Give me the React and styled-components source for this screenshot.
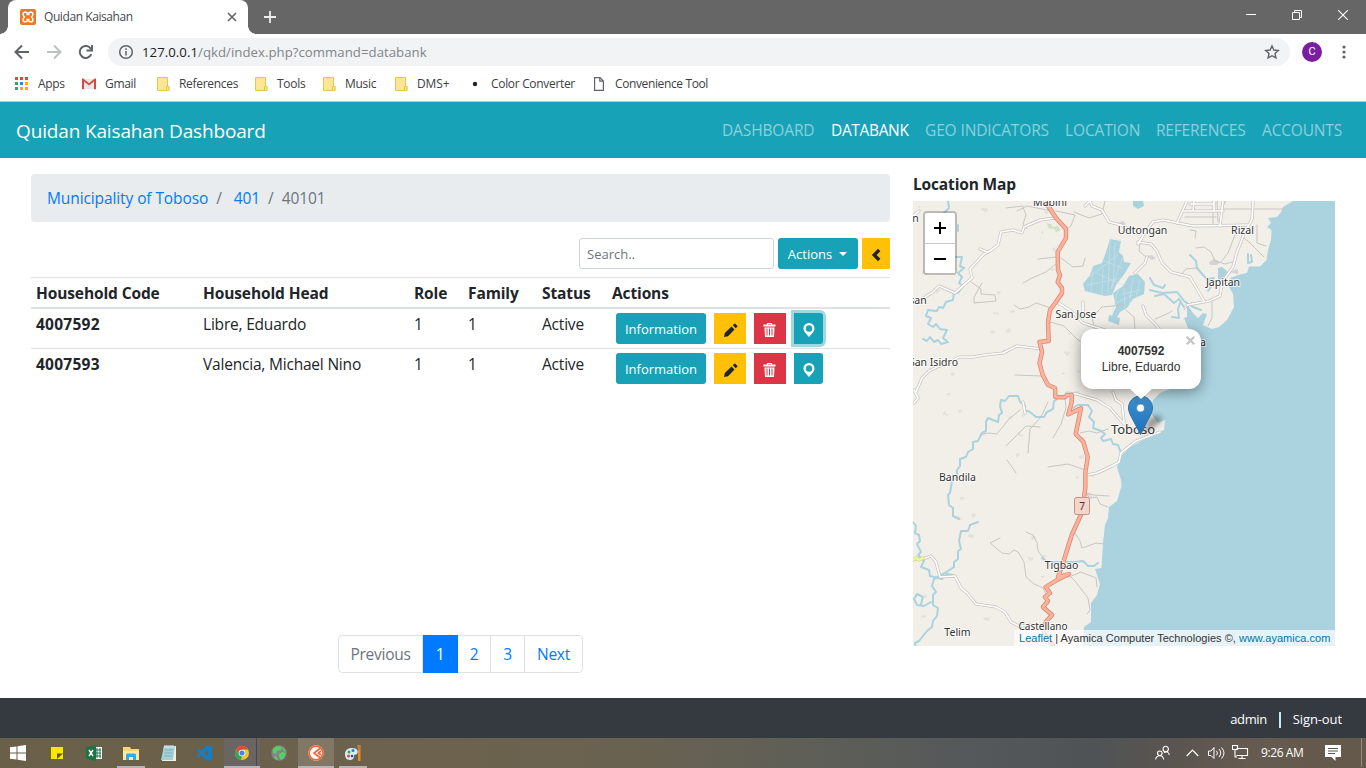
import React from "react";
import styled, { createGlobalStyle, css } from "styled-components";

const Global = createGlobalStyle`
  *, *::before, *::after { box-sizing: border-box; }
  html, body { margin: 0; height: 768px; overflow: hidden; background: #fff; }
  body { font-family: "Open Sans", "Noto Sans", sans-serif; font-size: 15.5px; color: #212529; line-height: 24px; }
  svg { display: block; flex: none; }
  a { text-decoration: none; }
`;

const Screen = styled.div`
  width: 1366px;
  height: 768px;
  display: flex;
  flex-direction: column;
  overflow: hidden;
`;

/* ---------- browser chrome ---------- */
const TabStrip = styled.div`
  height: 34px;
  background: #666;
  display: flex;
  align-items: stretch;
`;
const TabFoot = styled.span`
  width: 8px;
  background: radial-gradient(circle at ${(p) => (p.$right ? "100%" : "0")} 0, #666 7.500px, #fff 8px) bottom / 8px 8px no-repeat;
`;
const Tab = styled.div`
  width: 240px;
  background: #fff;
  border-radius: 8px 8px 0 0;
  display: flex;
  align-items: center;
  padding: 0 10px 0 12px;
  font-size: 12px;
  letter-spacing: -0.42px;
  color: #45494d;
`;
const TabTitle = styled.span`
  flex: 1;
  margin-left: 8px;
`;
const NewTab = styled.div`
  width: 28px;
  display: flex;
  align-items: center;
  justify-content: center;
`;
const WindowButtons = styled.div`
  margin-left: auto;
  display: flex;
  height: 29px;
`;
const WindowButton = styled.div`
  width: 46px;
  display: flex;
  align-items: center;
  justify-content: center;
`;
const AddressRow = styled.div`
  height: 35px;
  background: #fff;
  display: flex;
  align-items: center;
  padding: 0 14px;
`;
const NavIcons = styled.div`
  display: flex;
  gap: 16px;
  width: 94px;
`;
const AddressBar = styled.div`
  width: 1182px;
  height: 28px;
  border-radius: 14px;
  background: #f1f3f4;
  display: flex;
  align-items: center;
  padding: 0 10px;
`;
const Url = styled.span`
  flex: 1;
  margin-left: 8px;
  font-size: 13.2px;
  letter-spacing: 0.04px;
  color: #80868b;
  b { font-weight: 400; color: #202124; }
`;
const Avatar = styled.div`
  width: 20px;
  height: 20px;
  margin: 0 17px 0 12px;
  border-radius: 50%;
  background: #7b1fa2;
  color: #fff;
  font: 11px/20px Roboto, sans-serif;
  text-align: center;
`;
const Bookmarks = styled.div`
  height: 33px;
  display: flex;
  align-items: center;
  padding: 0 0 3px 14px;
  border-bottom: 1px solid #c3c6c8;
  background: #fff;
`;
const Bookmark = styled.div`
  display: flex;
  align-items: center;
  width: ${(p) => p.$w}px;
  font-size: 12px;
  letter-spacing: ${(p) => p.$ls || -0.3}px;
  color: #3c4043;
  white-space: nowrap;
`;
const BookmarkIcon = styled.span`
  width: ${(p) => p.$w}px;
  display: flex;
`;

/* ---------- application ---------- */
const Navbar = styled.header`
  height: 56px;
  background: #17a2b8;
  display: flex;
  align-items: center;
  justify-content: space-between;
  padding: 0 24px 0 16px;
`;
const Brand = styled.div`
  color: #fff;
  font-size: 19px;
  letter-spacing: -0.15px;
  padding-top: 2px;
`;
const NavLinks = styled.nav`
  display: flex;
  justify-content: space-between;
  width: 620px;
  padding-bottom: 1px;
`;
const NavLink = styled.a`
  width: ${(p) => p.$w}px;
  white-space: nowrap;
  letter-spacing: ${(p) => p.$ls}px;
  color: ${(p) => (p.$active ? "#fff" : "rgba(255,255,255,.5)")};
`;
const Content = styled.main`
  height: 540px;
  display: flex;
  padding: 16px 31px 0;
  gap: 23px;
`;
const ListPane = styled.section`
  width: 859px;
  height: 499px;
  display: flex;
  flex-direction: column;
`;
const Breadcrumb = styled.div`
  height: 48px;
  border-radius: 4px;
  background: #e9ecef;
  padding: 12px 16px;
  display: flex;
  gap: 8px;
  letter-spacing: -0.1px;
  color: #6c757d;
  a { color: #007bff; }
  a + i + a { margin-left: 4px; }
  i { font-style: normal; }
`;
const Tools = styled.div`
  margin-top: 16px;
  display: flex;
  justify-content: flex-end;
  gap: 4px;
`;
const Search = styled.input`
  width: 195px;
  height: 31px;
  border: 1px solid #ced4da;
  border-radius: 3px;
  padding: 4px 7px;
  font: 13px "Open Sans", sans-serif;
  outline: none;
  &::placeholder { color: #6c757d; opacity: 1; }
`;
const tones = {
  info: css`background: #17a2b8; color: #fff;`,
  warning: css`background: #ffc107; color: #212529;`,
  danger: css`background: #dc3545; color: #fff;`,
};
const Button = styled.button`
  ${(p) => tones[p.$tone]}
  width: ${(p) => p.$w}px;
  height: 31px;
  padding: ${(p) => p.$pad || "0"};
  border: 0;
  border-radius: ${(p) => p.$radius ?? "3px"};
  display: flex;
  align-items: center;
  justify-content: center;
  gap: 7px;
  font: 13px "Open Sans", sans-serif;
  box-shadow: ${(p) => (p.$focus ? "0 0 0 3px rgba(23,162,184,.42)" : "none")};
`;
const Caret = styled.span`
  border: 4px solid transparent;
  border-top-color: #fff;
  border-bottom: 0;
`;
const Table = styled.div`
  margin-top: 8px;
  border-top: 1px solid #dee2e6;
`;
const Row = styled.div`
  display: grid;
  grid-template-columns: 167px 211px 54px 74px 70px 1fr;
  height: ${(p) => (p.$head ? 31 : 40)}px;
  padding: ${(p) => (p.$head ? 3 : 4)}px 5px 0;
  border-bottom: ${(p) => (p.$head ? "2px solid #dee2e6" : p.$last ? "0" : "1px solid #dee2e6")};
  font-weight: ${(p) => (p.$head ? 700 : 400)};
  letter-spacing: ${(p) => (p.$head ? -0.12 : -0.2)}px;
`;
const Cell = styled.span`
  margin-top: -1px;
`;
const Code = styled(Cell)`
  font-weight: 700;
  letter-spacing: 0.25px;
`;
const RowActions = styled.div`
  display: flex;
  gap: 8px;
  padding-left: 4px;
`;
const Pagination = styled.div`
  margin: auto 0 0 307px;
  display: flex;
  width: 245px;
  height: 38px;
  border: 1px solid #dee2e6;
  border-radius: 4px;
  letter-spacing: -0.25px;
`;
const Page = styled.a`
  width: ${(p) => p.$w}px;
  margin: ${(p) => (p.$active ? "-1px 0" : 0)};
  line-height: ${(p) => (p.$active ? 38 : 36)}px;
  text-align: center;
  border-right: ${(p) => (p.$end ? 0 : "1px solid #dee2e6")};
  color: ${(p) => (p.$active ? "#fff" : p.$muted ? "#6c757d" : "#007bff")};
  background: ${(p) => (p.$active ? "#007bff" : "transparent")};
  ${(p) => p.$active && "border-color: #007bff;"}
`;
const MapPane = styled.section`
  width: 422px;
`;
const MapTitle = styled.div`
  font-weight: 700;
  letter-spacing: -0.15px;
  line-height: 20px;
  height: 27px;
`;
const MapFrame = styled.div`
  position: relative;
  width: 422px;
  height: 445px;
  overflow: hidden;
  background: #f2efe9;
`;
const ZoomControl = styled.div`
  position: absolute;
  left: 10px;
  top: 10px;
  width: 34px;
  border: 2px solid rgba(0, 0, 0, 0.22);
  background-clip: padding-box;
  border-radius: 4px;
`;
const ZoomButton = styled.div`
  height: 29px;
  background: #fff;
  display: flex;
  align-items: center;
  justify-content: center;
  &:first-child { height: 31px; border-bottom: 1px solid #ccc; border-radius: 2px 2px 0 0; }
`;
const Popup = styled.div`
  position: absolute;
  left: 168px;
  top: 128px;
  width: 120px;
  height: 60px;
  border-radius: 12px;
  background: #fff;
  box-shadow: 0 3px 14px rgba(0, 0, 0, 0.4);
  font: 12px/16px "Liberation Sans", Arial, sans-serif;
  color: #333;
  text-align: center;
  padding-top: 14px;
`;
const PopupClose = styled.span`
  position: absolute;
  right: 6px;
  top: 7px;
`;
const Attribution = styled.div`
  position: absolute;
  right: 0;
  bottom: 0;
  height: 16px;
  width: 321px;
  padding: 0 5px;
  background: rgba(255, 255, 255, 0.7);
  font: 11px/16px "Liberation Sans", Arial, sans-serif;
  letter-spacing: 0.02px;
  white-space: nowrap;
  color: #333;
  a { color: #0078a8; }
`;
const Footer = styled.footer`
  height: 40px;
  background: #343a40;
  color: #fff;
  display: flex;
  align-items: center;
  justify-content: flex-end;
  padding: 3px 24px 0 0;
  font-size: 13px;
`;
const FooterLink = styled.a`
  margin-top: -2px;
  letter-spacing: ${(p) => p.$ls}px;
`;
const FooterRule = styled.span`
  width: 2px;
  height: 16px;
  background: #c9e8f4;
  margin: 0 12px;
`;

/* ---------- taskbar ---------- */
const Taskbar = styled.div`
  height: 30px;
  display: flex;
  align-items: stretch;
  background: linear-gradient(90deg, #6a6049 0, #6c624d 430px, #6a6250 620px, #5f5f57 800px, #54585a 980px, #4f5355 1090px, #5b5550 1180px, #665b50 1260px, #635849 100%);
  color: #fff;
`;
const Task = styled.div`
  width: ${(p) => p.$w || 37}px;
  display: flex;
  align-items: center;
  justify-content: center;
  background: ${(p) => p.$bg || "transparent"};
  border-bottom: ${(p) => (p.$open ? "2px solid #b9b2bc" : "0")};
  ${(p) => p.$open && "padding-top: 2px;"}
  margin: 0 ${(p) => p.$gap || 0}px;
`;
const Tray = styled.div`
  margin-left: auto;
  display: flex;
  align-items: center;
  padding-bottom: 1px;
`;
const TrayIcon = styled.div`
  width: ${(p) => p.$w}px;
`;
const Clock = styled.div`
  width: 64px;
  font-size: 12px;
  letter-spacing: -0.4px;
`;
const ShowDesktop = styled.div`
  width: 5px;
  align-self: stretch;
  border-left: 1px solid #918a80;
`;

/* ---------- icons ---------- */
const XamppIcon = () => (
  <svg width="16" height="16" viewBox="0 0 16 16">
    <rect width="16" height="16" rx="2" fill="#e9782d" />
    <path d="M4.800 3.200H6q1.200 0 1.200 1.300v1h1.600v-1Q8.800 3.200 10 3.200h1.200q1.700 0 1.700 1.800 0 2-1.300 3 1.300 1 1.300 3 0 1.800-1.700 1.800H10q-1.200 0-1.200-1.300v-1H7.200v1q0 1.300-1.200 1.300H4.800q-1.700 0-1.700-1.800 0-2 1.300-3-1.300-1-1.300-3 0-1.800 1.700-1.800z" fill="none" stroke="#fff" strokeWidth="1.500" />
  </svg>
);
const StrokeIcon = ({ w = 16, h = 16, box, d, color = "#5f6368", sw = 2 }) => (
  <svg width={w} height={h} viewBox={box || `0 0 ${w} ${h}`} fill="none" stroke={color} strokeWidth={sw}>
    <path d={d} />
  </svg>
);
const AppsIcon = () => (
  <svg width="14" height="14" viewBox="0 0 14 14">
    {["#ea4335", "#ea4335", "#ea4335", "#34a853", "#2684fc", "#f9ab00", "#34a853", "#f9ab00", "#f9ab00"].map((c, i) => (
      <rect key={i} x={1 + (i % 3) * 5} y={Math.floor(i / 3) * 5} width="3" height="3" fill={c} />
    ))}
  </svg>
);
const GmailIcon = () => (
  <svg width="14" height="12" viewBox="0 0 14 12">
    <path d="M1 1h12v10H1z" fill="#e8e8e8" />
    <path d="M0 1.200Q0 .3.9.300L7 5.200 13.100.300Q14 .3 14 1.200V11.300H12V3.600L7 7.500 2 3.600V11.300H0z" fill="#d54b3d" />
  </svg>
);
const FolderIcon = () => (
  <svg width="13" height="14" viewBox="0 0 13 14">
    <path d="M.5.500h10v9h1.500v4H.500z" fill="#ffe694" stroke="#e9c453" />
    <path d="M9.500 13.500v-4h2.500v4z" fill="#ffe694" stroke="#e9c453" />
  </svg>
);
const FileIcon = () => (
  <svg width="10" height="14" viewBox="0 0 10 14" fill="none" stroke="#5f6368" strokeWidth="1.200">
    <path d="M.6.600h5.400l3.400 3.400v9.400H.600zM5.800.600v3.600h3.600" />
  </svg>
);
const PencilIcon = () => (
  <svg width="14" height="14" viewBox="0 0 14 14" fill="#212529">
    <path d="M0 14l.8-4L7.500 3.500l3 3L4 13.200zM8.700 2.300L10.300.700q.5-.5 1 0l2 2q.5.500 0 1L11.700 5.300z" />
  </svg>
);
const TrashIcon = () => (
  <svg width="13" height="14" viewBox="0 0 13 14" fill="#fff">
    <path d="M4 0h5v1.500h3.500v2H.500v-2H4zM5 1v.6h3V1zM1.500 4.500h10L11 14H2zM3.500 5.500v7h1v-7zm2.500 0v7h1v-7zm2.500 0v7h1v-7z" fillRule="evenodd" />
  </svg>
);
const PinIcon = () => (
  <svg width="12" height="14" viewBox="0 0 12 14" fill="#fff">
    <path d="M6 0a5.500 5.500 0 0 0-5.500 5.500C.5 8.500 3.500 11 6 14c2.500-3 5.500-5.500 5.500-8.500A5.500 5.500 0 0 0 6 0zm0 2.300a3.200 3.200 0 1 1 0 6.400 3.200 3.200 0 0 1 0-6.400z" fillRule="evenodd" />
  </svg>
);

const shore =
  "M1293 201L1288 204 1283 207 1281 212 1277 217 1268 218 1271 223 1267 227 1271.500 230 1271 240 1268 250 1266.500 260 1260 266.500 1249 266.500 1247 273 1240 274.500 1230 278 1228 285 1233 294 1234 307 1227 320 1219 327 1212 329 1203 325 1207 314 1203 313 1198 318 1193 313 1185 301 1187 306 1187 317 1184 318 1189 330 1189 386 1170 389 1160 393 1153 400 1150 412 1158 423 1165 420 1164 430 1147 438 1130 447 1122 455 1117 467 1121 480 1121.500 486 1117 501 1109 507 1108 518 1105 525 1103 543 1101.500 568 1095 569 1100 584 1097 595 1091 603 1091 622 1084 627 1083 646H1335V201Z";
const highway =
  "M1045 201L1056 218 1066 229V238L1057.700 252 1058 270 1060 275 1057.700 282 1062 288V293L1056 302 1050 310 1048 322 1048.700 341 1039.500 342 1042 352 1039.500 363 1042.700 375 1048 385 1055 388 1055.300 397 1065 397.300 1067 395H1071.700V402L1068.300 414.300 1081 408.300 1075.700 434 1083.300 441.700 1087.700 457 1085.300 473V488L1081.700 513 1071.700 535 1063 563 1058 577 1069 574 1057 580 1045.700 587 1050 593 1045 597 1048 601 1043 607 1052 615 1045.700 622 1044 633 1053 646";
const rivers = [
  "M948 201l1 7-5 5 4 5-3 8M958 225v6M955 257h7l-2 9 4 2-6 5 4 4-3 6 4 3-5 7-4-1-1 8-7 2-3 6-4-1-2 4-9-1-2 6 5 2-3 6 5 3 3-3 4 5 7 1-4 8 5 4-7 2-3-4-4 2-4-5-3 4-4-2",
  "M1066 397l-7 1-5 3-1 8-6 3-3 5h-8l-6-5-5-2v-5l-5-3-2-6h-9l-4 5-4-1-1 6 2 7-3 2-1 7-10-4-2 4v9l-4 2-4 8-5 1v7l-5 3-2 5-6 2v7l-3 4v7l-5 4-2 12-2 2 1 10 4 3v8l6 3",
  "M978 522l-8 3-2 6h-7l-2 10 2 8-3 2v8l-4 3v5l-9 6-11 6-2 7 4 6-3 3v10l5 3-1 8-4 5-1 6-5 4-8 10-4 2 1 6 4 1v3",
  "M913 522l3 4-1 7 4 2 1 6-3 3 4 8-3 3 6 6-3 6 8 3 1 6 12 3 5-5 6 1M931 602l-7 4-7-1-3-6 3-5 6 3-2 7",
  "M1073 408l5-3h10l4 6-3 6 5 5-1 6 8 3 4 3-4 4 2 3 8-2 2 5 5 1 3 8",
  "M1042 558l5 4h28l8-1 5 5h6l4-3",
  "M1190 255l6 6 1 7 6 7 4 4 7-1-5 4 15-1M1207 282l4 5-3 4M1150 278l4 7 9 3 2-3M1155 296l9-2 10 9 5-4 5 8M1150 290l12 3 15-1 7 9 9 6 8 3M1172 317l7 1-1-9 2-6M1248 254v9l4-1-1-7",
];
const whiteRoads = [
  "M1055 218l-15 2-16 7-2 6-9-3-12 2-3 13-8 6-6 3-14 15 2 9-7 6-10 9-16-7-7 7-4 2-8 6M980 249l7 3M919 211l-6 5",
  "M1085 206l5-5 2 5 10 4 7 12 12 3 15 8M1138 244l8-13 7-9 10-2 30 6 54-1M1253 201l-1 18-8 15-7 18-4 15-11 15-2 14-11 5-22 4M1138 242l13 2 6 7 5 12 9 9 19 5 14 24M1147 257l-2 6-10 10",
  "M1187 201l-10 22M1223 201l-3 25M1183 211h40M1190 204h24M1214 201v10M1193 211l1-10",
  "M1042 349l-25-3-14 7-18 2-12 2h-14l-9 5-13 5-8 4-7 7-6 14M914 390l4 8-4 5",
  "M1067 393l10 1 20 6 13 8 14 16 12 8M1087 475l10-2 15-7 7-4 2-9 15-12 24-9M1113 392l3 8 6 4 2 18",
  "M923 559l8-3 5 6 4 15 15-1 6 12 6 5 9 11 20 3 9 5 6 10 8 4 12-1M1056 301l15 10 12 12 22 7M1083 302l0 13M1143 306l3 9 11 11 5 8M1023 402l2 11",
];
const paths = [
  "M1017 211l10-5 25 5M1023 207l3 8-3 9 4 5M1056 211l19 4-4 11-5 3M1006 208l17-2M971 282l10 7 0 5 14 1 1 6-22 2 0-6 8-14M1057 257l-19 2M1057 263l-11 9-14 6-9 5M1061 258l12 9 10-1 2-8M1014 305l6 4 9-2 7-4 12 4 4 4M1047 321l17 5 14 14 12 5",
  "M1048 402l-7 15-11 12-2 24M1040 427l-14-1-20 20M1007 460l9 13M980 435l8-2 9 1 12-15 11-9M1015 375l26 1M1065 398l1 10-5 16-8 14M1080 433l9-2 8 2 11-4M1048 467l20-3 17 6",
  "M1000 538l-10 5 12 10 7 1 5-4 4 2 6 10 2 15 8 7 9 4 3 6M1026 532l7 3 4 8 1 8 7 9 12 5M1075 533l5 8 2 7 14-5 8 1M1083 490l7 8 7-1 3 7 8 3M1085 493l9 2 15 1M1058 577l11 0 12-5 15 6 1 9M1069 575l6 6 13 17 2 12-3 4",
  "M1235 235l-7 18-7 9M1223 209h62M1242 224v12l9 8 13 13M1257 225v18l9 3M1185 217h31M1213 211v13M1221 225v-16l6-10M1190 230l6 1-1 7M1196 248l8-1 7 5 4 9 10 3 8-2M1105 201l-3 13-13 4-15-6M1192 302l-8 8M1212 302v16l-4 8M1218 222l-1-21M1126 310l8 7 1 12M1155 319l14-6 3-2M1140 244l-1 7 7 6M1096 335l-4-18 10-10 22-2M1180 276l6-7 10-1",
];
const scrub = Array.from({ length: 80 }, (_, i) => {
  const x = 918 + ((i * 73 + (i % 7) * 11) % 190);
  const y = 206 + ((i * 127 + (i % 5) * 17) % 430);
  return `M${x} ${y}l${2 + (i % 4)} ${-(i % 3)}l1 ${1 + (i % 3)}l-3 1z`;
}).join("");
const places = [
  ["Mabini", 1050, 205.500, 10.5], ["Udtongan", 1142.500, 234, 10.500], ["Rizal", 1242.500, 234, 10.5], ["Japitan", 1223, 286, 10.5],
  ["San Jose", 1076, 318, 10.5], ["San Isidro", 933.500, 366, 10.5], ["Bandila", 957.500, 481, 10.5], ["Tigbao", 1061.500, 569, 10.5],
  ["Castellano", 1043, 630, 10], ["Telim", 957.500, 636, 10.5], ["Toboso", 1133, 434, 13], ["san", 918, 304, 10.5], ["n", 915.500, 222, 10.5], ["a", 1203, 345.500, 10.5],
];

const MapDrawing = () => (
  <svg width="422" height="445" viewBox="913 201 422 445" fill="none" strokeLinejoin="round" strokeLinecap="round">
    <defs>
      <linearGradient id="pin" x1="0" y1="0" x2="0" y2="1">
        <stop offset="0" stopColor="#3f8fcb" /><stop offset="1" stopColor="#1c72c0" />
      </linearGradient>
      <filter id="soft" x="-50%" y="-50%" width="200%" height="200%"><feGaussianBlur stdDeviation="2.8" /></filter>
    </defs>
    <path d={scrub} fill="#e3e0dd" />
    <path d="M1047 223l4 1 2 3 5-1 2 4-4 2-2-3-6-1z" fill="#cfe3c3" />
    <path d="M1209 262l5-3 6 3-3 3h-7zM1229 272l9-3v5zM1146 256l6-1 4 3-4 2zM1118 223l5-2 3 3-5 2z" fill="#d5d3d4" />
    <path d={shore} fill="#aad3df" />
    <path d="M1110 239l11 2-2 11 4 4 1 6 7 1-6 10-9 12-4 10-7 1-20-5-2-7 7-9 3-9 9-3 3-8zM1113 293l10-7 6-10 9-2 7 8-1 12-11 5-6 9-7 4-5 9-4-3 5-11zM1133 201h10l1 5-6 3-5-3zM1218 268l4-1 6 5-2 8-8 1zM1109 315l11 3-1 7-11-4z" fill="#aad3df" />
    <path d="M1110 240l-2 52M1118 255l-29 22M1087 285l36-7M1096 273l27 12M1102 260l20 8M1115 243l-2 45M1122 259l-11 30M1093 268l-2 24M1103 267l-1 27M1118 290l-6 24M1124 288l1 21M1133 278l-4 28M1140 280l-4 18M1116 303l17-8M1122 294l18-4" stroke="#cfe2e6" strokeWidth=".6" />
    {rivers.map((d, i) => <path key={i} d={d} stroke="#aad3df" strokeWidth="2" />)}
    {paths.map((d, i) => <path key={i} d={d} stroke="#c3c1be" strokeWidth=".9" />)}
    {whiteRoads.map((d, i) => <path key={i} d={d} stroke="#c5c2bd" strokeWidth="3.1" />)}
    {whiteRoads.map((d, i) => <path key={i} d={d} stroke="#fff" strokeWidth="1.7" />)}
    <path d="M913 560l3-2 3 2 4-2" stroke="#cddc8a" strokeWidth="3.5" />
    <path d="M913 560l3-2 3 2 4-2" stroke="#f4fa9c" strokeWidth="2" />
    <path d={highway} stroke="#df8069" strokeWidth="4.400" />
    <path d={highway} stroke="#f9b29c" strokeWidth="3" />
    <rect x="1074.500" y="497.500" width="15" height="17" rx="2" fill="#f2d5cd" stroke="#c99185" />
    <text x="1082" y="510" fontFamily="Noto Sans" fontSize="10" fill="#5d2c24" textAnchor="middle">7</text>
    {places.map(([name, x, y, size]) => (
      <text key={name} x={x} y={y} fontFamily="Noto Sans, sans-serif" fontSize={size} textAnchor="middle" fill="#333" stroke="#fff" strokeOpacity=".75" strokeWidth="2" paintOrder="stroke">{name}</text>
    ))}
    <path d="M1141 435l8-16q4-5 11-3 4 4-3 9z" fill="#222" opacity=".42" filter="url(#soft)" />
    <path d="M1140.500 396c-6.800 0-12 5.400-12 12 0 3.300 1.500 6.300 3 9l9 17.500 9-17.500c1.500-2.700 3-5.700 3-9 0-6.600-5.200-12-12-12z" fill="url(#pin)" stroke="#2e6f9f" />
    <circle cx="1140.500" cy="408" r="4" fill="#fff" stroke="#2f70a4" strokeWidth=".6" />
  </svg>
);
const PopupTip = styled.span`
  position: absolute;
  left: 48px;
  top: 59px;
  border: 12px solid transparent;
  border-top: 11px solid #fff;
  border-bottom: 0;
`;

const links = [["DASHBOARD", 93, -0.13], ["DATABANK", 78, -0.35], ["GEO INDICATORS", 124, -0.13], ["LOCATION", 75, -0.13], ["REFERENCES", 90, -0.2], ["ACCOUNTS", 80, -0.17]];
const households = [["4007592", "Libre, Eduardo"], ["4007593", "Valencia, Michael Nino"]];

export default function App() {
  return (
    <Screen>
      <Global />
      <TabStrip>
        <TabFoot />
        <Tab>
          <XamppIcon />
          <TabTitle>Quidan Kaisahan</TabTitle>
          <StrokeIcon w={12} h={12} d="M2 2l8 8M10 2l-8 8" sw={1.600} />
        </Tab>
        <TabFoot $right />
        <NewTab><StrokeIcon w={12} h={12} d="M6 0v12M0 6h12" color="#eee" sw={1.800} /></NewTab>
        <WindowButtons>
          <WindowButton><StrokeIcon w={10} h={10} d="M0 4.500h10" color="#fff" sw={1} /></WindowButton>
          <WindowButton><StrokeIcon w={10} h={10} d="M.5 2.500h7v7h-7zM2.500 2.500v-2h7v7h-2" color="#fff" sw={1} /></WindowButton>
          <WindowButton><StrokeIcon w={10} h={10} d="M0 0l10 10M10 0L0 10" color="#fff" sw={1.100} /></WindowButton>
        </WindowButtons>
      </TabStrip>
      <AddressRow>
        <NavIcons>
          <StrokeIcon d="M15 8H2M8 1.500L1.500 8 8 14.500" />
          <StrokeIcon d="M1 8h13M8 1.500L14.500 8 8 14.500" color="#bdc1c6" />
          <StrokeIcon d="M13.300 10.200A6 6 0 1 1 13 5M14 1v5.500H8.500" />
        </NavIcons>
        <AddressBar>
          <svg width="16" height="16" viewBox="0 0 16 16" fill="none" stroke="#5f6368" strokeWidth="1.500">
            <circle cx="8" cy="8" r="6.300" /><path d="M8 7v4.500M8 4.300v1.700" />
          </svg>
          <Url><b>127.0.0.1</b>/qkd/index.php?command=databank</Url>
          <StrokeIcon d="M8 2l1.900 4 4.400.5-3.300 3 .9 4.400L8 11.700l-3.900 2.200.9-4.400-3.300-3 4.400-.5z" sw={1.400} />
        </AddressBar>
        <Avatar>C</Avatar>
        <svg width="10" height="16" fill="#5f6368">
          <circle cx="5" cy="3" r="1.600" /><circle cx="5" cy="8" r="1.600" /><circle cx="5" cy="13" r="1.600" />
        </svg>
      </AddressRow>
      <Bookmarks>
        <Bookmark $w={68}><BookmarkIcon $w={24}><AppsIcon /></BookmarkIcon>Apps</Bookmark>
        <Bookmark $w={75}><BookmarkIcon $w={23}><GmailIcon /></BookmarkIcon>Gmail</Bookmark>
        <Bookmark $w={98}><BookmarkIcon $w={22}><FolderIcon /></BookmarkIcon>References</Bookmark>
        <Bookmark $w={68}><BookmarkIcon $w={22}><FolderIcon /></BookmarkIcon>Tools</Bookmark>
        <Bookmark $w={72}><BookmarkIcon $w={22}><FolderIcon /></BookmarkIcon>Music</Bookmark>
        <Bookmark $w={77} $ls={-0.1}><BookmarkIcon $w={22}><FolderIcon /></BookmarkIcon>DMS+</Bookmark>
        <Bookmark $w={122} $ls={-0.32}><BookmarkIcon $w={19}><svg width="6" height="6"><circle cx="3" cy="3" r="2.200" fill="#222" /></svg></BookmarkIcon>Color Converter</Bookmark>
        <Bookmark $w={122} $ls={-0.38}><BookmarkIcon $w={21}><FileIcon /></BookmarkIcon>Convenience Tool</Bookmark>
      </Bookmarks>

      <Navbar>
        <Brand>Quidan Kaisahan Dashboard</Brand>
        <NavLinks>
          {links.map(([name, w, ls]) => <NavLink key={name} $w={w} $ls={ls} $active={name === "DATABANK"}>{name}</NavLink>)}
        </NavLinks>
      </Navbar>

      <Content>
        <ListPane>
          <Breadcrumb><a>Municipality of Toboso</a><i>/</i><a>401</a><i>/</i><span>40101</span></Breadcrumb>
          <Tools>
            <Search placeholder="Search.." />
            <Button $tone="info" $w={80} $pad="0 1px 0 0">Actions <Caret /></Button>
            <Button $tone="warning" $w={28} $radius="1px" $pad="2px 0 0">
              <StrokeIcon w={10} h={14} d="M8.200 2L3.200 7l5 5" color="#212529" sw={3.400} />
            </Button>
          </Tools>
          <Table>
            <Row $head>
              <span>Household Code</span><span>Household Head</span><span>Role</span><span>Family</span><span>Status</span><span>Actions</span>
            </Row>
            {households.map(([code, head], i) => (
              <Row key={code} $last={i === 1}>
                <Code>{code}</Code><Cell>{head}</Cell><Cell>1</Cell><Cell>1</Cell><Cell>Active</Cell>
                <RowActions>
                  <Button $tone="info" $w={90}>Information</Button>
                  <Button $tone="warning" $w={32} $radius="0" $pad="3px 0 0 1px"><PencilIcon /></Button>
                  <Button $tone="danger" $w={32} $radius="0" $pad="3px 1px 0 0"><TrashIcon /></Button>
                  <Button $tone="info" $w={29} $radius="0 3px 3px 0" $pad="3px 0 0" $focus={i === 0}><PinIcon /></Button>
                </RowActions>
              </Row>
            ))}
          </Table>
          <Pagination>
            <Page $w={84} $muted>Previous</Page>
            <Page $w={35} $active>1</Page>
            <Page $w={33}>2</Page>
            <Page $w={34}>3</Page>
            <Page $w={57} $end>Next</Page>
          </Pagination>
        </ListPane>
        <MapPane>
          <MapTitle>Location Map</MapTitle>
          <MapFrame>
            <MapDrawing />
            <ZoomControl>
              <ZoomButton><StrokeIcon w={12} h={12} d="M6 0v12M0 6h12" color="#000" /></ZoomButton>
              <ZoomButton><StrokeIcon w={12} h={12} d="M0 6h12" color="#000" /></ZoomButton>
            </ZoomControl>
            <Popup>
              <b>4007592</b><br />Libre, Eduardo
              <PopupClose><StrokeIcon w={9} h={9} d="M.7.700l7.600 7.600M8.300.700L.7 8.300" color="#c3c3c3" sw={2.100} /></PopupClose>
              <PopupTip />
            </Popup>
            <Attribution><a>Leaflet</a> | Ayamica Computer Technologies ©, <a>www.ayamica.com</a></Attribution>
          </MapFrame>
        </MapPane>
      </Content>

      <Footer><FooterLink $ls={-0.4}>admin</FooterLink><FooterRule /><FooterLink $ls={-0.1}>Sign-out</FooterLink></Footer>

      <Taskbar>
        <Task $w={36}>
          <svg width="16" height="16" fill="#fff"><path d="M0 2.300l6.500-.9v6.100H0zM7.500 1.200L16 0v7.500H7.500zM0 8.500h6.500v6.100L0 13.700zM7.500 8.500H16V16l-8.500-1.200z" /></svg>
        </Task>
        <Task $w={42}>
          <svg width="12" height="12"><path d="M0 0h12v12H0z" fill="#ffe600" /><path d="M6 12V6.500h6z" fill="#5e5637" /></svg>
        </Task>
        <Task $w={31}>
          <svg width="16" height="16"><path d="M9 2h7v12H9z" fill="#fff" /><path d="M11 3v10M14 3v10M9 5h6M9 8h6M9 11h6" stroke="#207245" /><path d="M0 2l10-2v16L0 14z" fill="#207245" /><path d="M3 5l4 6M7 5l-4 6" stroke="#fff" strokeWidth="1.400" /></svg>
        </Task>
        <Task $w={28} $gap={8} $open>
          <svg width="17" height="15"><path d="M0 1h7l1 2h8v11H0z" fill="#f7d774" /><path d="M0 5h16v9H0z" fill="#ffe9a2" /><path d="M3 14V9q0-1.500 1.500-1.500h7Q13 7.500 13 9v5h-3v-3H6v3z" fill="#38a9dd" /></svg>
        </Task>
        <Task $w={31}>
          <svg width="15" height="16"><path d="M3 1h12v15H1z" fill="#f3efe0" /><path d="M3 1h11l-2 14H0z" fill="#a4d0d8" /><path d="M4 5h8M3.500 8h8M3 11h8" stroke="#7fb3c0" /><path d="M4 0v3M6 0v3M8 0v3M10 0v3M12 0v3" stroke="#e6eef0" /></svg>
        </Task>
        <Task $w={40}>
          <svg width="16" height="16"><path d="M11.500 0L16 2v12l-4.500 2L5 10 2 12.500.500 11.500 4 8 .5 4.500 2 3.500 5 6zM12 4.500L7.500 8l4.500 3.500z" fill="#0f80cc" fillRule="evenodd" /></svg>
        </Task>
        <Task $w={36} $bg="linear-gradient(90deg,#6a6463 32px,#4e4841 32px,#4e4841 33px,#6a6463 33px)" $open>
          <svg width="14" height="14" viewBox="0 0 14 14"><circle cx="7" cy="7" r="7" fill="#f1c232" /><path d="M.9 3.500A7 7 0 0 1 13 3.500H7L4 8.500z" fill="#df4937" /><path d="M.9 3.500L4.500 9 7 10.500 6 14A7 7 0 0 1 .9 3.500" fill="#36a650" /><circle cx="7" cy="7" r="3.300" fill="#fff" /><circle cx="7" cy="7" r="2.600" fill="#4184f3" /></svg>
        </Task>
        <Task $w={38}>
          <svg width="16" height="16"><circle cx="8" cy="8" r="7.800" fill="#858089" /><path d="M2 4l4-3 5 1-1 3-4 1-1 3-3-1zM8 9l3-2 4 1-2 5-3 2-2-3zM11 3l3 1 1 3-2-1zM3 11l3 1 1 3-3-1z" fill="#55cf62" /></svg>
        </Task>
        <Task $w={36} $bg="#807764" $open>
          <svg width="16" height="16"><circle cx="8" cy="8" r="7.700" fill="#fff" /><circle cx="8" cy="8" r="6.900" fill="none" stroke="#f1673b" strokeWidth="1.700" /><path d="M12.500 3L6 8l6.500 5M10.500 8v.01M13 6l-2.500 2 2.500 2" fill="none" stroke="#f1673b" strokeWidth="1.700" /></svg>
        </Task>
        <Task $w={28} $gap={5} $open>
          <svg width="17" height="16"><path d="M7 3c5 0 7 3 5 6-1 1-3 0-3 2s-1 4-4 4C1 15 0 12 0 9c0-4 3-6 7-6z" fill="#d8eaf4" /><circle cx="4" cy="7" r="1.500" fill="#35a853" /><circle cx="8" cy="5.500" r="1.500" fill="#2c7bd0" /><circle cx="3.500" cy="11" r="1.500" fill="#e04a3b" /><circle cx="7" cy="11" r="1.300" fill="#2455a5" /><path d="M13 4h2.500v12H13z" fill="#ec8b22" /><path d="M12 0h4l-.5 5H13z" fill="#b77d52" /></svg>
        </Task>
        <Tray>
          <TrayIcon $w={31}><StrokeIcon w={15} h={15} d="M8 4a2.700 2.700 0 1 1 5.400 0A2.700 2.700 0 0 1 8 4zM9 7.500q4.500-2 5.300 2.500M2.500 8.300a2.300 2.300 0 1 1 4.600 0 2.300 2.300 0 0 1-4.600 0zM.6 14.500q.5-3.500 4-3.700t4 3.700" color="#fff" sw={1.100} /></TrayIcon>
          <TrayIcon $w={22}><StrokeIcon w={13} h={8} d="M.7 7L6.500 1.200 12.300 7" color="#fff" sw={1.200} /></TrayIcon>
          <TrayIcon $w={24}><StrokeIcon w={17} h={14} d="M.5 5h2.500l3-3.500v11L3 9.500H.500zM8.500 4.800q2 2.200 0 4.500M11 3q3.500 4 0 8M13.500 1.500q5 5.500 0 11" color="#fff" sw={1} /></TrayIcon>
          <TrayIcon $w={29}><StrokeIcon w={17} h={15} d="M4.500 3.500h11v7h-11M10 10.500v3M6.500 13.500h7M.5.500h5v4h-5zM3 4.500v7.500h2" color="#fff" sw={1.100} /></TrayIcon>
          <Clock>9:26 AM</Clock>
          <TrayIcon $w={36}>
            <svg width="16" height="16"><path d="M0 0h16v12h-5.500v4l-4-4H0z" fill="#fff" /><path d="M3 3.500h10M3 6h10M3 8.500h7" stroke="#5b554e" /></svg>
          </TrayIcon>
          <ShowDesktop />
        </Tray>
      </Taskbar>
    </Screen>
  );
}
